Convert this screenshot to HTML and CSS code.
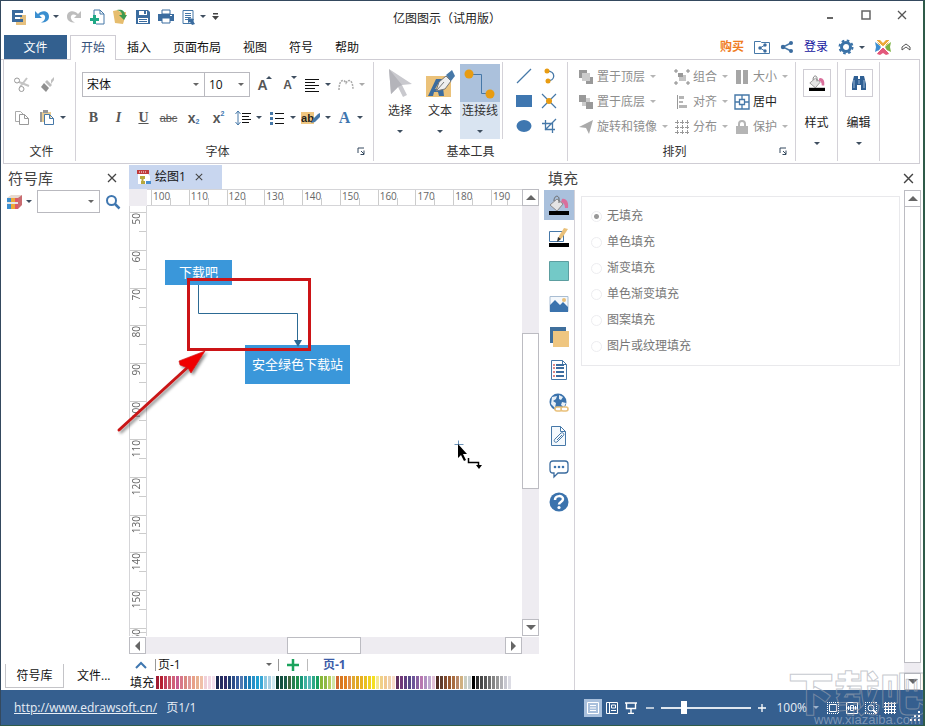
FILE: index.html
```html
<!DOCTYPE html>
<html lang="zh-CN">
<head>
<meta charset="utf-8">
<title>亿图图示（试用版）</title>
<link rel="stylesheet" href="styles.css">
</head>
<body>
<svg class="defs" aria-hidden="true">
  <symbol id="bucket" viewBox="0 0 20 20">
    <path d="M13 4c4-1 7 3 6 9l-3 0c0-3-1-5-4-6z" fill="#d9709c"/>
    <path d="M1 10l7-6 6 5-6 7z" fill="#e4e4e4" stroke="#8a8a8a"/>
    <path d="M5 6c0-6 5-6 5-2v4" fill="none" stroke="#666"/>
    <path d="M0 16h20v4H0z" fill="#000"/>
  </symbol>
  <symbol id="close" viewBox="0 0 10 10"><path d="M1 1l8 8M9 1L1 9" stroke="currentColor" stroke-width="1.3" fill="none"/></symbol>
  <symbol id="launch" viewBox="0 0 8 8"><path d="M1 6V1h6M4 4l3 3M7 3.500v4H3.500" stroke="#34495e" fill="none"/></symbol>
</svg>
<div class="app">
  <header class="titlebar">
    <div class="quick">
      <button class="ib" aria-label="菜单"><svg width="16" height="16"><path d="M9 6h6v10H5v-3h7v-2H9z" fill="#e5c07f"/><path d="M1 1h11v3H4v2h7v2H4v2h8v3H1z" fill="#3a6a9d"/></svg></button>
      <button class="ib drop" aria-label="撤销"><svg width="16" height="16"><path d="M1 2v7h7L5.500 6.500C9 4 12 6 11 9.500c-.5 2-2 3-4 4 5 0 8-2 8-6C15 2 8 .5 4 5z" fill="#3b8fd0"/></svg><i class="caret"></i></button>
      <button class="ib" aria-label="重做"><svg width="16" height="16"><path d="M15 2v7H8l2.500-2.500C7 4 4 6 5 9.500c.5 2 2 3 4 4C4 13.500 1 11.500 1 7.500 1 2 8 .5 12 5z" fill="#bdbdbd"/></svg></button>
      <button class="ib" aria-label="新建"><svg width="16" height="16"><path d="M5 8V1h6l4 4v10H7" fill="#fff" stroke="#4678a8"/><path d="M11 1v4h4" fill="none" stroke="#4678a8"/><path d="M4 6h3v3h3v3H7v3H4v-3H1V9h3z" fill="#1fa886"/></svg></button>
      <button class="ib" aria-label="打开"><svg width="16" height="16"><path d="M1 2l5-1 2 2h6v2l-3 10-8-1z" fill="#e6bd6e"/><path d="M5 1c5-1 8 1 8 5h2l-3 5-5-5h3C10 3 8 2 5 1z" fill="#3d9a50"/></svg></button>
      <button class="ib" aria-label="保存"><svg width="16" height="16"><path d="M1 1h12l2 2v12H1z" fill="#3b6c9f"/><path d="M4 2h8v4H4zM3 9h10v5H3z" fill="#fff"/><path d="M9 2h2v3H9zM4 10h8v1H4zM4 12h8v1H4z" fill="#3b6c9f"/></svg></button>
      <button class="ib" aria-label="打印"><svg width="16" height="16"><path d="M4 1h8v4H4z" fill="#fff" stroke="#3b6c9f"/><path d="M0 5h16v7H0z" fill="#3b6c9f"/><path d="M4 9h8v5H4z" fill="#fff" stroke="#3b6c9f"/><path d="M12 6h2v1h-2z" fill="#fff"/></svg></button>
      <button class="ib drop" aria-label="预览"><svg width="16" height="16"><path d="M2 1.500h10v13H2z" fill="#fff" stroke="#4678a8"/><path d="M4 4.500h6M4 6.500h6M4 8.500h6M4 10.500h3" stroke="#4678a8"/><path d="M7 9l6 1-1 2 2 3-3 1-2-3-2 1z" fill="#3b6c9f"/></svg><i class="caret"></i></button>
      <button class="ib mini" aria-label="自定义"><svg width="8" height="8"><path d="M1 0h5v1.500H1z" fill="#444"/><path d="M0 3h7L3.500 7z" fill="#444"/></svg></button>
    </div>
    <h1>亿图图示（试用版）</h1>
    <div class="winbtns">
      <button aria-label="最小化"><svg width="10" height="10"><path d="M2 7h6v2H2z" fill="#666"/></svg></button>
      <button aria-label="最大化"><svg width="10" height="10"><path d="M1 1h8v8H1z" fill="none" stroke="#666" stroke-width="1.500"/></svg></button>
      <button aria-label="关闭"><svg width="10" height="10"><use href="#close"/></svg></button>
    </div>
  </header>

  <nav class="tabs">
    <button class="file">文件</button>
    <button class="tab on">开始</button><button class="tab">插入</button><button class="tab">页面布局</button><button class="tab">视图</button><button class="tab">符号</button><button class="tab">帮助</button>
    <div class="account">
      <a href="#buy" class="buy">购买</a>
      <button aria-label="分享文件夹"><svg width="16" height="16"><path d="M.5 2.500h6l1 1h8v11H.5z" fill="none" stroke="#4678a8"/><path d="M11 6L6 9l5 3" fill="none" stroke="#4678a8"/><g fill="#3b6c9f"><circle cx="11" cy="6" r="1.700"/><circle cx="6" cy="9" r="1.700"/><circle cx="11" cy="12" r="1.700"/></g></svg></button>
      <button aria-label="分享"><svg width="14" height="14"><path d="M11 3L3 7l8 4" fill="none" stroke="#4678a8" stroke-width="1.500"/><g fill="#3b6c9f"><circle cx="11" cy="3" r="2"/><circle cx="3" cy="7" r="2.200"/><circle cx="11" cy="11" r="2"/></g></svg></button>
      <a href="#login" class="login">登录</a>
      <button class="gear" aria-label="设置"><svg width="16" height="16"><circle cx="8" cy="8" r="4.500" fill="none" stroke="#3b73a8" stroke-width="3"/><circle cx="8" cy="8" r="6.500" fill="none" stroke="#3b73a8" stroke-width="2" stroke-dasharray="2.600 2.500"/></svg><i class="caret"></i></button>
      <button aria-label="主页"><svg width="16" height="16"><path d="M1 1l4 0 3 3 3-3h4l-3 5-4 1-4-1z" fill="#eda938"/><path d="M2 15l2-4 4-3 4 3 2 4-3 1-3-2-3 2z" fill="#e35a7c"/><path d="M0 3l4 3 2 2-2 3-4 2 1-5z" fill="#3c8ed0"/><path d="M16 3l-4 3-2 2 2 3 4 2-1-5z" fill="#7cb342"/><path d="M1 1l14 14M15 1L1 15" stroke="#fff"/></svg></button>
      <button aria-label="折叠功能区"><svg width="10" height="8"><path d="M1 4l4-3 4 3v3L5 4 1 7z" fill="#fff" stroke="#555"/></svg></button>
    </div>
  </nav>

  <section class="ribbon">
    <div class="group g-file">
      <div class="lines two">
        <div class="line">
          <button class="tb" aria-label="剪切"><svg width="16" height="16"><path d="M5 5l10 4M6 10L13 1" stroke="#c4c4c4" stroke-width="2"/><circle cx="3" cy="3.500" r="2.500" fill="#fff" stroke="#999"/><circle cx="7.500" cy="12" r="2.500" fill="#fff" stroke="#999"/></svg></button>
          <button class="tb" aria-label="格式刷"><svg width="16" height="16"><path d="M12 3l3-3v3l-3 4z" fill="#c0c0c0"/><path d="M8 3l5 5-2 2-5-5z" fill="#bbb"/><path d="M5 6l5 5-3 4-5-5z" fill="#8f8f8f"/></svg></button>
        </div>
        <div class="line">
          <button class="tb" aria-label="复制"><svg width="16" height="16"><path d="M5 11.500H1.500v-10h5l3 3" fill="none" stroke="#aaa"/><path d="M5.500 4.500h5l4 4v6h-9zM10.500 4.500v4h4" fill="#fff" stroke="#999"/></svg></button>
          <button class="tb paste" aria-label="粘贴"><svg width="16" height="16"><path d="M1 2h11v10H1z" fill="#e8cb92"/><path d="M1 2h2v10H1zM4 0h5v3H4z" fill="#969696"/><path d="M5.500 4.500h5l4 4v6h-9zM10.500 4.500v4h4" fill="#fff" stroke="#4678a8"/></svg><i class="caret"></i></button>
        </div>
      </div>
      <h2>文件</h2>
    </div>

    <div class="group g-font">
      <div class="lines two">
        <div class="line">
          <label class="combo family"><select aria-label="字体"><option>宋体</option></select></label>
          <label class="combo size"><select aria-label="字号"><option>10</option></select></label>
          <button class="tb" aria-label="增大字号"><span class="glyph sans">A</span><i class="caret up"></i></button>
          <button class="tb" aria-label="减小字号"><span class="glyph sans small">A</span><i class="caret top"></i></button>
          <button class="tb drop2" aria-label="对齐"><svg width="16" height="14"><path d="M1 1.500h14M1 4.500h10M1 7.500h14M1 10.500h10M1 13.500h14" stroke="#111"/></svg><i class="caret"></i></button>
          <button class="tb drop2 dim" aria-label="弯曲文字"><svg width="16" height="14"><path d="M1 12C1 1 6 1 8 5c2-4 7-4 7 7" fill="none" stroke="#aaa" stroke-width="1.500" stroke-dasharray="2 1"/></svg><i class="caret"></i></button>
        </div>
        <div class="line">
          <button class="tb glyph serif">B</button>
          <button class="tb glyph serif ital">I</button>
          <button class="tb glyph serif under">U</button>
          <button class="tb glyph strike">abc</button>
          <button class="tb glyph sans" aria-label="下标">x<sub>2</sub></button>
          <button class="tb glyph sans" aria-label="上标">x<sup>2</sup></button>
          <button class="tb drop2" aria-label="行距"><svg width="16" height="16"><path d="M3 1v14M.5 4L3 1l2.500 3M.5 12L3 15l2.500-3" fill="none" stroke="#4678a8"/><path d="M7 3.500h9M7 6.500h7M7 9.500h9M7 12.500h7" stroke="#111"/></svg><i class="caret"></i></button>
          <button class="tb drop2" aria-label="项目符号"><svg width="16" height="14"><path d="M1 1h3v3H1zM1 6h3v3H1zM1 11h3v3H1z" fill="#4678a8"/><path d="M6 2.500h9M6 7.500h9M6 12.500h9" stroke="#111"/></svg><i class="caret"></i></button>
          <button class="tb drop2" aria-label="突出显示"><span class="mark">ab</span><svg class="pen" width="9" height="10"><path d="M9 0v4L4 9 0 10l2-4 5-5z" fill="#4678a8"/></svg><i class="caret"></i></button>
          <button class="tb drop2" aria-label="字体颜色"><span class="glyph serif blue">A</span><i class="caret"></i></button>
        </div>
      </div>
      <h2>字体</h2><button class="launcher" aria-label="字体设置"><svg width="8" height="8"><use href="#launch"/></svg></button>
    </div>

    <div class="group g-tools">
      <div class="bigs">
        <button class="big"><span><svg width="26" height="32"><path d="M2 2l23 15-10 1 5 10-4 2-5-10-7 7z" fill="#c9c9ce"/><path d="M2 2l13 16-4 2-7 7z" fill="#b4b4ba"/></svg></span>选择<i class="caret"></i></button>
        <button class="big"><span><svg width="30" height="32"><path d="M1 9h25v21H1z" fill="#ebc27a"/><path d="M3 29l8-17h6l2 17h-5l-1-4H9l-1 4zM10 22h3v-5z" fill="#3b6c9f"/><path d="M14 15l7-6 5 5-6 8-9 2z" fill="#eee" stroke="#777"/><path d="M12 23l7-8" stroke="#777"/><path d="M21 8l6-5 3 6-4 5z" fill="#4678a8"/></svg></span>文本<i class="caret"></i></button>
        <button class="big on"><span><svg width="34" height="32"><path d="M8 7.500h10.500v19H30" fill="none" stroke="#4678a8"/><circle cx="6" cy="7" r="4.500" fill="#e89c12"/><circle cx="27" cy="27" r="4.500" fill="#e89c12"/></svg></span>连接线<i class="caret"></i></button>
      </div>
      <div class="shapes">
        <button aria-label="直线"><svg width="16" height="16"><path d="M1 15L15 1" stroke="#4678a8" stroke-width="1.300"/></svg></button>
        <button aria-label="弧线"><svg width="16" height="16"><path d="M6 3c9 0 9 10 0 10" fill="none" stroke="#4678a8" stroke-width="1.300"/><circle cx="6" cy="3" r="2.500" fill="#e89c12"/><circle cx="7" cy="13" r="2.500" fill="#e89c12"/></svg></button>
        <button aria-label="矩形"><svg width="16" height="16"><path d="M0 2h16v12H0z" fill="#3f77b0"/></svg></button>
        <button aria-label="连接点"><svg width="16" height="16"><path d="M1 1l14 14M15 1L1 15" stroke="#4678a8" stroke-width="1.200"/><circle cx="8" cy="8" r="3" fill="#e89c12"/></svg></button>
        <button aria-label="椭圆"><svg width="16" height="16"><ellipse cx="8" cy="8" rx="7.500" ry="6" fill="#3f77b0"/></svg></button>
        <button aria-label="裁剪"><svg width="16" height="16"><path d="M4.500 2v9.500H14M1 5.500h10.500V15M4 12L15 1" fill="none" stroke="#4678a8" stroke-width="1.300"/></svg></button>
      </div>
      <h2>基本工具</h2>
    </div>

    <div class="group g-arrange">
      <div class="arrange">
        <button disabled><svg width="16" height="16"><path d="M1 1h8v8H1z" fill="#999"/><path d="M8 8h7v7H8z" fill="#999"/><path d="M4 4h8v8H4z" fill="#ccc"/></svg>置于顶层<i class="caret"></i></button>
        <button disabled><svg width="16" height="16"><path d="M5 6h7v6H5z" fill="#c4c4c4"/><path d="M4 4h5v4H4z" fill="#999"/><path d="M1 1h2v2H1zM13 1h2v2h-2zM1 13h2v2H1zM13 13h2v2h-2z" fill="#fff" stroke="#888"/></svg>组合<i class="caret"></i></button>
        <button disabled><svg width="16" height="16"><path d="M2 1h5v14H2zM9 1h5v14H9z" fill="#a6a6a6"/></svg>大小<i class="caret"></i></button>
        <button disabled><svg width="16" height="16"><path d="M4 4h8v8H4z" fill="#ccc"/><path d="M1 1h7v7H1zM8 8h7v7H8z" fill="#999"/></svg>置于底层<i class="caret"></i></button>
        <button disabled><svg width="16" height="16"><path d="M3.500 1v14" stroke="#999"/><path d="M5 2h5v3H5zM5 7h4v2H5zM5 11h8v3H5z" fill="#b5b5b5"/></svg>对齐<i class="caret"></i></button>
        <button class="live"><svg width="16" height="16"><path d="M1 1h14v14H1z" fill="none" stroke="#4678a8" stroke-width="1.400"/><path d="M5.500 5.500h5v5h-5zM8 1v4M8 11v4M1 8h4M11 8h4" fill="none" stroke="#4678a8" stroke-width="1.300"/></svg>居中</button>
        <button disabled><svg width="16" height="16"><path d="M1 8l14-7-4 14-3-6z" fill="#aaa"/></svg>旋转和镜像<i class="caret"></i></button>
        <button disabled><svg width="16" height="16"><path d="M1 3.500h14M1 8.500h14M1 13.500h14M3.500 1v14M8.500 1v14M13.500 1v14" stroke="#999" stroke-dasharray="4 1"/></svg>分布<i class="caret"></i></button>
        <button disabled><svg width="16" height="16"><path d="M2 7h12v8H2z" fill="#b5b5b5"/><path d="M5 8V5c0-4 6-4 6 0v3" fill="none" stroke="#b5b5b5" stroke-width="2"/></svg>保护<i class="caret"></i></button>
      </div>
      <h2>排列</h2><button class="launcher" aria-label="排列设置"><svg width="8" height="8"><use href="#launch"/></svg></button>
    </div>

    <div class="group slim"><button><span><svg width="16" height="16"><use href="#bucket"/></svg></span>样式<i class="caret"></i></button></div>
    <div class="group slim"><button><span><svg width="16" height="16"><path d="M3 1h4v3h2V1h4l2 8v6h-5v-5H6v5H1V9z" fill="#2f5f93"/><path d="M3 5v8M13 5v8M8 5v4" stroke="#9bb8d6"/></svg></span>编辑<i class="caret"></i></button></div>
  </section>

  <main class="work">
    <aside class="library">
      <div class="phead"><h3>符号库</h3><button aria-label="关闭符号库"><svg width="10" height="10"><use href="#close"/></svg></button></div>
      <div class="find">
        <button aria-label="图库"><svg width="15" height="16"><path d="M0 4l4-3h11l-2 4z" fill="#e7d9cf"/><path d="M0 4h4v11H0z" fill="#3b8fd0"/><path d="M4 4h4v11H4z" fill="#eda938"/><path d="M8 4l3 0v11H8z" fill="#dd5b66"/><path d="M11 4l4-3v10l-4 4z" fill="#c96b70"/><path d="M0 8h11v2H0z" fill="#e6e6e6"/></svg><i class="caret"></i></button>
        <label class="combo"><select aria-label="搜索符号"><option></option></select></label>
        <button aria-label="搜索"><svg width="16" height="16"><circle cx="6.500" cy="6.500" r="4.500" fill="none" stroke="#3f77b0" stroke-width="2"/><path d="M10 10l4.500 4.500" stroke="#3f77b0" stroke-width="2.500"/></svg></button>
      </div>
      <div class="ltabs"><button class="on">符号库</button><button>文件...</button></div>
    </aside>

    <section class="document">
      <div class="dtabs"><div class="dtab"><svg width="16" height="16"><path d="M2 4h9l3 3v8H2z" fill="#fff"/><path d="M1 1h12v4H1z" fill="#c03a3a"/><path d="M3 3h8" stroke="#fff" stroke-dasharray="1 1"/><path d="M4 7h5v3H4zM5 12h4v3H5z" fill="#b8a83c"/><path d="M6.500 9v4" stroke="#b8a83c" stroke-width="2"/><path d="M10 12h5v3h-5z" fill="#4a8ed0"/></svg>绘图1<button aria-label="关闭绘图1"><svg width="8" height="8"><use href="#close"/></svg></button></div></div>
      <div class="stage">
        <div class="corner"></div>
        <div class="hruler" id="hruler"></div>
        <div class="vscroll"><button aria-label="向上"><i class="arrow n"></i></button><div class="rail"><div class="thumb"></div></div><button aria-label="向下"><i class="arrow s"></i></button></div>
        <div class="vruler" id="vruler"></div>
        <div class="canvas">
          <div class="node start">下载吧</div>
          <div class="node end">安全绿色下载站</div>
          <svg class="ink" width="220" height="180">
            <defs><filter id="sh" x="-20%" y="-20%" width="140%" height="140%"><feDropShadow dx="2" dy="2" stdDeviation="1.500" flood-opacity=".45"/></filter></defs>
            <path d="M88.500 15v28.500h99V70" fill="none" stroke="#2c6a94"/><path d="M184 70h8l-4 7z" fill="#2c6a94"/>
            <path d="M78.500 9.500h121v70h-121z" fill="none" stroke="#cc1417" stroke-width="3"/>
            <g filter="url(#sh)"><path d="M9 160L78 97" stroke="#c91418" stroke-width="3" stroke-linecap="round"/><path d="M95 81L81 103l-3-5-8-3-1-4z" fill="#f00505" stroke="#c91418" stroke-width=".6"/></g>
          </svg>
          <svg class="cursor" width="32" height="32"><path d="M.5 4.500h9M4.500.5v9" stroke="#6c93b8"/><path d="M4 4v14l3-3 3 6 2-1-3-6h4z" fill="#000"/><path d="M14.500 18v4.500h10V27" fill="none" stroke="#000" stroke-width="1.500"/><path d="M22 25h6l-3 4z" fill="#000"/></svg>
        </div>
        <div class="hscroll"><button aria-label="向左"><i class="arrow w"></i></button><div class="rail"><div class="thumb"></div></div><button aria-label="向右"><i class="arrow e"></i></button></div>
      </div>
      <div class="pages">
        <button class="chev" aria-label="展开页"><svg width="12" height="8"><path d="M1 7l5-5 5 5" fill="none" stroke="#3f77b0" stroke-width="2"/></svg></button>
        <label class="pagesel"><select aria-label="页"><option>页-1</option></select></label>
        <button class="add" aria-label="新增页"><svg width="12" height="12"><path d="M6 0v12M0 6h12" stroke="#1ba35c" stroke-width="2.500"/></svg></button>
        <a href="#page1">页-1</a>
      </div>
      <div class="palette"><span>填充</span><div class="swatches" id="swatches"></div></div>
    </section>

    <aside class="props">
      <div class="phead"><h3>填充</h3><button aria-label="关闭填充"><svg width="11" height="11" viewBox="0 0 10 10"><use href="#close"/></svg></button></div>
      <div class="pbody">
        <div class="side">
          <button class="on" aria-label="填充"><svg width="20" height="20"><use href="#bucket"/></svg></button>
          <button aria-label="线条"><svg width="20" height="20"><path d="M.5 3.500h14v10H.5z" fill="#fff" stroke="#4678a8"/><path d="M15 0l4 1-6 9-4 3 1-5z" fill="#e9c07a"/><path d="M9 9l3 2-4 3z" fill="#333"/><path d="M0 15h20v4H0z" fill="#000"/></svg></button>
          <button aria-label="阴影"><svg width="20" height="20"><path d="M.5.5h19v19H.5z" fill="#73c9c7" stroke="#5c9ea0"/></svg></button>
          <button aria-label="图片"><svg width="20" height="20"><path d="M1 2.500h18v15H1z" fill="#f4f8fc" stroke="#a9bdd2"/><path d="M1 17V11l5-5 5 5 3-3 5 5v5H1z" fill="#3b73ad"/><circle cx="15" cy="6" r="2" fill="#e9c07a"/></svg></button>
          <button aria-label="图层"><svg width="20" height="20"><path d="M1 0h16v16H1z" fill="#3f6f9c"/><path d="M4 4h16v16H4z" fill="#efc680"/></svg></button>
          <button aria-label="页面属性"><svg width="18" height="20"><path d="M1.500.5h11l4 4v15h-15zM12.500.5v4h4" fill="#fff" stroke="#4678a8"/><path d="M6 5h8M6 8h8M6 12h8M6 16h8" stroke="#3b6c9f" stroke-width="2"/><path d="M3 5h2M3 8h2M3 12h2M3 16h2" stroke="#d88" stroke-width="2"/></svg></button>
          <button aria-label="超链接"><svg width="20" height="20"><circle cx="9" cy="9" r="8.500" fill="#3b73ad"/><path d="M3 4l5-1-1 3-3 2 3 2-1 5-4-4zM10 2l4 2-2 3-2-1zM13 9l4 1-2 4-3-2z" fill="#e8f0f7"/><g fill="#fff" stroke="#e9c07a" stroke-width="1.600"><rect x="6" y="14" width="7" height="4" rx="2"/><rect x="12" y="14" width="7" height="4" rx="2"/></g></svg></button>
          <button aria-label="附件"><svg width="18" height="20"><path d="M1.500.5h9l5 5v14h-14zM10.500.5v5h5" fill="#f4f9fd" stroke="#4678a8"/><path d="M5 13l6-6c2-1 4 1 2 3l-6 6c-2 1-4-1-2-3l5-5M7 14l5-5" fill="none" stroke="#4678a8"/></svg></button>
          <button aria-label="注释"><svg width="20" height="20"><path d="M4 2h12c2 0 3 1 3 3v6c0 2-1 3-3 3H9l-4 4v-4H4c-2 0-3-1-3-3V5c0-2 1-3 3-3z" fill="#fff" stroke="#3b6c9f" stroke-width="1.300"/><g fill="#3b73ad"><circle cx="6" cy="8" r="1.300"/><circle cx="10" cy="8" r="1.300"/><circle cx="14" cy="8" r="1.300"/></g></svg></button>
          <button aria-label="帮助"><svg width="20" height="20"><circle cx="10" cy="10" r="9.500" fill="#3b73ad"/><path d="M6 8c0-5 8-5 8-1 0 3-4 3-4 5.500" fill="none" stroke="#fff" stroke-width="2.500"/><circle cx="10" cy="15.500" r="1.600" fill="#fff"/></svg></button>
        </div>
        <div class="options">
          <fieldset disabled>
            <label><input type="radio" name="fill" checked>无填充</label>
            <label><input type="radio" name="fill">单色填充</label>
            <label><input type="radio" name="fill">渐变填充</label>
            <label><input type="radio" name="fill">单色渐变填充</label>
            <label><input type="radio" name="fill">图案填充</label>
            <label><input type="radio" name="fill">图片或纹理填充</label>
          </fieldset>
        </div>
        <div class="vscroll long"><button aria-label="面板向上"><i class="arrow n"></i></button><div class="rail"><div class="thumb"></div></div><button aria-label="面板向下"><i class="arrow s"></i></button></div>
      </div>
    </aside>
  </main>

  <footer class="status">
    <a href="http://www.edrawsoft.cn/">http://www.edrawsoft.cn/</a><span>页1/1</span>
    <div class="zoombar">
      <button class="on" aria-label="普通视图"><svg width="12" height="12"><path d="M.5.5h11v11H.5zM3 3.500h6M3 6h6M3 8.500h6" fill="none" stroke="#fff"/></svg></button>
      <button aria-label="大纲视图"><svg width="12" height="12"><path d="M.5.5h11v11H.5zM3.500 1v10M5.500 3v3h4V3zM5 8.500h5" fill="none" stroke="#fff"/></svg></button>
      <button aria-label="演示视图"><svg width="12" height="12"><path d="M0 1h12M1.500 1v5.500h9V1M6 7v4M3 11.500h6" fill="none" stroke="#fff" stroke-width="1.400"/></svg></button>
      <button aria-label="缩小"><svg width="10" height="10"><path d="M1 5h8" stroke="#fff" stroke-width="1.300"/></svg></button>
      <input type="range" min="0" max="100" value="23" aria-label="缩放">
      <button aria-label="放大"><svg width="10" height="10"><path d="M1 5h8M5 1v8" stroke="#fff" stroke-width="1.300"/></svg></button>
      <button class="pct">100%<i class="caret"></i></button>
      <button aria-label="适合页面"><svg width="12" height="12"><path d="M2.500 2.500h7v7h-7z" fill="none" stroke="#fff"/><path d="M0 .5h12M0 11.500h12M.5 0v12M11.500 0v12" fill="none" stroke="#fff" stroke-dasharray="1 1"/></svg></button>
      <button aria-label="适合宽度"><svg width="12" height="12"><path d="M.5.500h11v11H.5zM4.500 3.500h3v5h-3zM2.500 4v4M9.500 4v4M1 6h10" fill="none" stroke="#fff"/></svg></button>
      <button aria-label="区域缩放"><svg width="12" height="12"><path d="M0 .5h12M0 11.500h12M.5 0v12M11.500 0v12" fill="none" stroke="#fff" stroke-dasharray="1 1"/><circle cx="6" cy="6" r="3" fill="none" stroke="#fff"/><path d="M8 8l4 4" stroke="#fff" stroke-width="2"/></svg></button>
      <button aria-label="网格"><svg width="12" height="12"><path d="M1.500 0v12M4.500 0v12M7.500 0v12M10.500 0v12M0 1.500h12M0 4.500h12M0 7.500h12M0 10.500h12" stroke="#fff"/></svg></button>
    </div>
    <svg class="grip" width="10" height="10"><path d="M8 0h2v2H8zM8 4h2v2H8zM4 4h2v2H4zM8 8h2v2H8zM4 8h2v2H4zM0 8h2v2H0z" fill="#fff"/></svg>
  </footer>
  <div class="brand"><b>下载吧</b><span>www.xiazaiba.com</span></div>
</div>
<script src="app.js"></script>
</body>
</html>
```
FILE: styles.css
```css
* { box-sizing: border-box; }
body {
  margin: 0;
  background: #fff;
  color: #222;
  font: 12px/18px "Open Sans", "Noto Sans CJK SC", sans-serif;
}
button, select, input { font: inherit; color: inherit; margin: 0; }
button { border: 0; padding: 0; background: none; display: flex; align-items: center; justify-content: center; white-space: nowrap; }
svg { flex: none; display: block; }
h1, h2, h3 { margin: 0; font-weight: 400; }
.defs { position: absolute; width: 0; height: 0; }

.app {
  position: relative;
  overflow: hidden;
  height: 100vh;
  display: flex;
  flex-direction: column;
  border: solid #34495e;
  border-width: 1px 2px 1px 1px;
  border-right-color: #2f5b49;
  border-bottom-color: #2f5b49;
}

.caret { flex: none; border: 3px solid transparent; border-top-color: #3f4f60; border-bottom: 0; }

/* title bar */
.titlebar { flex: none; height: 34px; display: grid; grid-template-columns: 392px 1fr auto; align-items: center; }
.quick { display: flex; padding: 0 0 3px 6px; }
.ib { width: 23px; height: 22px; }
.ib.drop { width: 32px; gap: 3px; }
.ib.mini { width: 14px; }
.titlebar h1 { font-size: 12px; padding-top: 2px; }
.winbtns { display: flex; padding: 0 16px 6px 0; gap: 26px; color: #555; }

/* tabs */
.tabs { flex: none; height: 25px; display: flex; padding-left: 3px; border-bottom: 1px solid #cfcdd4; margin-right: 3px; }
.file { width: 63px; background: #33608f; color: #fff; margin-right: 3px; padding-top: 2px; }
.tab { padding: 2px 11px 0; color: #111; }
.tab.on { margin-bottom: -1px; padding: 0 10px; color: #33507a; background: #fff; border: 1px solid #cfcdd4; border-bottom: 0; }
.account { margin-left: auto; display: flex; align-items: center; gap: 10px; padding-right: 9px; }
.account a { text-decoration: none; }
.account .buy { color: #f07c1e; font-weight: 700; }
.account .login { color: #1414a0; }
.gear { gap: 5px; }

/* ribbon */
.ribbon { flex: none; height: 104px; margin: 0 3px 0 2px; display: flex; border: 1px solid #cfcdd4; border-top: 0; }
.group { position: relative; display: flex; flex-direction: column; border-right: 1px solid #d4d2d8; margin: 2px 0; }
.group h2 { font-size: 12px; text-align: center; height: 18px; margin-top: auto; color: #333; }
.g-file { width: 72px; }
.g-file h2 { padding-left: 4px; }
.g-font { width: 298px; }
.g-font h2 { padding-right: 14px; }
.g-tools { width: 194px; display: grid; grid-template-columns: auto 1fr; grid-template-rows: 78px auto; }
.g-tools h2 { grid-column: 1 / 3; }
.g-arrange { width: 228px; }
.g-arrange h2 { padding-right: 14px; }
.launcher { position: absolute; right: 8px; bottom: 6px; }
.lines { display: flex; flex-direction: column; gap: 8px; padding: 10px 0 0 5px; }
.line { display: flex; height: 25px; align-items: center; }
.tb { width: 25px; height: 24px; position: relative; }
.tb.paste { width: 36px; gap: 5px; }
.tb.drop2 { width: 34px; gap: 5px; }
.dim .caret { border-top-color: #aaa; }
.combo { position: relative; height: 25px; display: flex; border: 1px solid #b9b9bf; background: #fff; }
.combo select, .pagesel select { appearance: none; border: 0; background: none; width: 100%; padding: 0 4px; outline: 0; color: #111; }
.combo::after, .pagesel::after { content: ""; position: absolute; right: 5px; top: 50%; margin-top: -2px; border: 3px solid transparent; border-top-color: #666; border-bottom: 0; }
.family { width: 123px; }
.g-font .line > .family { margin-left: 1px; }
.size { width: 46px; margin-left: -1px; }
.tb .up { position: absolute; right: 3px; top: 3px; transform: scaleY(-1); }
.tb .top { position: absolute; right: 3px; top: 3px; }
.glyph { font-weight: 700; color: #555; font-size: 14px; }
.glyph.small { font-size: 12px; }
.sans { font-family: "Liberation Sans", sans-serif; }
.serif { font-family: "Liberation Serif", serif; }
.ital { font-style: italic; }
.under { text-decoration: underline; }
.strike { font: 11px "Liberation Sans", sans-serif; text-decoration: line-through; }
.blue { color: #3f77b0; font-size: 16px; padding: 0 2px; }
.glyph sub, .glyph sup { font-size: 7px; line-height: 8px; color: #3f77b0; }
.glyph sup { align-self: flex-start; margin-top: 4px; }
.glyph sub { align-self: flex-end; margin-bottom: 4px; }
.mark { font: 700 11px/12px "Liberation Sans", sans-serif; background: #efc680; color: #222; }
.pen { margin-left: -8px; }

.bigs { display: flex; padding: 2px 2px 0 6px; border-right: 1px solid #d4d2d8; margin-bottom: 1px; }
.big { width: 40px; flex-direction: column; justify-content: flex-start; color: #333; padding-bottom: 5px; }
.big span { height: 38px; width: 40px; display: flex; align-items: center; justify-content: center; }
.big .caret, .slim .caret { margin-top: 10px; }
.big.on { background: #d9e4f1; }
.big.on span { background: #abc1dc; }
.shapes { display: grid; grid-template-columns: 25px 25px; grid-auto-rows: 25px; padding: 1px 0 0 8px; }
.arrange { display: grid; grid-template-columns: 96px 60px 1fr; grid-auto-rows: 25px; padding: 2px 0 0 10px; }
.arrange button { justify-content: flex-start; gap: 3px; color: #8e8e8e; }
.arrange .caret { border-top-color: #b5b5b5; margin-left: 2px; }
.arrange button.live { color: #222; }
.slim { width: 42px; align-items: center; }
.slim button { flex-direction: column; padding-top: 7px; color: #222; }
.slim span { width: 28px; height: 28px; border: 1px solid #cfcdd4; display: flex; align-items: center; justify-content: center; margin-bottom: 17px; }

/* work area */
.work { flex: 1; min-height: 0; display: grid; grid-template-columns: 128px minmax(0, 1fr) 384px; }
.phead { flex: none; height: 26px; display: flex; justify-content: space-between; align-items: center; color: #444; padding: 2px 12px 0 7px; }
.phead h3 { font-size: 15px; line-height: 22px; }
.library { display: flex; flex-direction: column; }
.find { display: flex; align-items: center; gap: 5px; padding-left: 6px; }
.find button { gap: 4px; }
.find .combo { width: 63px; height: 23px; }
.ltabs { margin-top: auto; display: flex; padding: 0 0 2px 4px; gap: 13px; }
.ltabs button { height: 24px; color: #111; }
.ltabs .on { width: 59px; border: 1px solid #c4c4c8; border-top: 0; }

.document { display: flex; flex-direction: column; min-width: 0; }
.dtabs { flex: none; height: 25px; display: flex; padding-top: 1px; }
.dtab { width: 93px; background: #c8d6ef; display: flex; align-items: center; padding-left: 7px; gap: 3px; color: #111; }
.dtab button { margin-left: 6px; color: #444; }
.stage { flex: 1; min-height: 0; display: grid; grid-template-columns: 18px minmax(0, 1fr) 17px; grid-template-rows: 17px minmax(0, 1fr) 18px; }
.corner { background: #eeecf1; }
.hruler { display: flex; padding-left: 4px; border: solid #d5d5d8; border-width: 1px 0; overflow: hidden; font-size: 10px; line-height: 12px; color: #666; }
.hruler div { flex: 1; min-width: 0; border-left: 1px solid #ccc; padding-left: 1px; background: linear-gradient(#ccc, #ccc) 50% 100% / 1px 7px no-repeat; }
.hruler div:last-child { flex: none; width: 31px; }
.vruler { display: flex; flex-direction: column; padding-top: 6px; border: solid #d5d5d8; border-width: 0 1px; overflow: hidden; font-size: 10px; line-height: 12px; color: #666; }
.vruler div { flex: 1; min-height: 0; border-top: 1px solid #ccc; background: linear-gradient(#ccc, #ccc) 100% 50% / 7px 1px no-repeat; }
.vruler div:last-child { flex: none; height: 8px; overflow: hidden; }
.vruler span { display: block; writing-mode: vertical-rl; transform: rotate(180deg); width: 12px; }
.vscroll { grid-column: 3; grid-row: 1 / 3; display: flex; flex-direction: column; background: #eeecf1; }
.vscroll button, .hscroll button { flex: none; width: 17px; height: 17px; background: #fff; border: 1px solid #bcbcc2; }
.rail { flex: 1; display: flex; flex-direction: inherit; min-width: 0; min-height: 0; }
.thumb { background: #fff; border: 1px solid #bcbcc2; }
.vscroll .rail { padding-top: 127px; }
.vscroll .thumb { height: 156px; }
.hscroll { grid-column: 1 / 3; align-self: end; display: flex; background: #eeecf1; box-shadow: 17px 0 #eeecf1; }
.hscroll .rail { padding-left: 141px; }
.hscroll .thumb { width: 74px; }
.arrow { border: 5px solid transparent; }
.arrow.n { border-top: 0; border-bottom-color: #666; }
.arrow.s { border-bottom: 0; border-top-color: #666; }
.arrow.w { border-left: 0; border-right-color: #666; }
.arrow.e { border-right: 0; border-left-color: #666; }

.canvas { position: relative; background: #fff; }
.node { position: absolute; background: #3a97da; color: #fff; font-size: 13px; display: flex; align-items: center; justify-content: center; white-space: nowrap; padding-bottom: 2px; }
.start { left: 18px; top: 54px; width: 67px; height: 25px; }
.end { left: 98px; top: 139px; width: 105px; height: 39px; }
.ink { position: absolute; left: -37px; top: 64px; }
.cursor { position: absolute; left: 307px; top: 234px; }

.pages { flex: none; height: 22px; display: flex; align-items: center; padding-left: 5px; }
.chev { width: 14px; margin-right: 7px; }
.pagesel { position: relative; width: 124px; height: 12px; display: flex; align-items: center; border: solid #999; border-width: 0 1px; }
.pagesel select { padding: 0 2px; line-height: 18px; }
.pagesel::after { right: 6px; }
.add { width: 29px; height: 12px; border-right: 1px solid #bbb; }
.pages a { margin-left: 15px; color: #3c5ca8; font-weight: 700; text-decoration: none; }
.palette { flex: none; height: 14px; display: flex; line-height: 14px; color: #111; }
.palette span { flex: none; white-space: nowrap; padding-left: 1px; }
.swatches { display: flex; gap: 1px; padding-left: 2px; height: 13px; }
.swatches i { width: 3px; }

.props { display: flex; flex-direction: column; padding-left: 5px; min-width: 0; }
.props .phead { padding: 2px 9px 0 4px; }
.pbody { flex: 1; min-height: 0; display: flex; }
.side { width: 31px; display: flex; flex-direction: column; gap: 3px; border-right: 1px solid #d4d2d8; }
.side button { width: 30px; height: 30px; }
.side .on { background: #a9c0dc; }
.options { flex: 1; padding: 6px 4px 0 6px; }
fieldset { margin: 0; padding: 6px 9px; border: 1px solid #e9e9ec; min-width: 0; }
fieldset label { display: flex; align-items: center; height: 26px; gap: 5px; color: #777; }
fieldset input { appearance: none; width: 11px; height: 11px; border: 1px solid #ededf0; border-radius: 50%; }
fieldset input:checked { background: radial-gradient(#999 0 2px, transparent 3px); }
.long { margin-right: 2px; }
.long .rail { padding: 0 0 10px; }
.long .thumb { flex: 1; height: auto; border-top: 0; }

/* status bar */
.status { flex: none; position: relative; height: 35px; background: #355f8f; color: #e8eef6; display: flex; align-items: center; padding-left: 13px; gap: 9px; }
.status a { color: inherit; }
.zoombar { margin-left: auto; display: flex; align-items: center; padding-right: 24px; gap: 1px; }
.zoombar button { width: 18px; height: 18px; }
.zoombar .on { background: #a9c0dc; }
.zoombar .pct { width: auto; gap: 6px; padding: 0 4px; }
.pct .caret { border-top-color: #9fb4cd; }
.zoombar input { appearance: none; width: 90px; height: 14px; margin: 0 1px; background: linear-gradient(#dfe7f0, #dfe7f0) 50% 50% / 100% 2px no-repeat; }
.zoombar input::-webkit-slider-thumb { appearance: none; width: 6px; height: 13px; background: #fff; }
.grip { position: absolute; right: 3px; bottom: 4px; }

.brand { position: absolute; right: 0; bottom: 0; width: 135px; height: 56px; overflow: hidden; white-space: nowrap; pointer-events: none; color: transparent; }
.brand b { display: block; font-size: 46px; line-height: 46px; font-weight: 900; -webkit-text-stroke: 1px rgba(160, 165, 175, .6); }
.brand span { position: absolute; left: 26px; bottom: -3px; font: 13px/16px "Liberation Sans", sans-serif; color: rgba(170, 185, 205, .6); }
```
FILE: app.js
```js
const fillRuler = (id, first, last) => {
  const ruler = document.getElementById(id);
  for (let n = first; n <= last; n += 10) {
    const cell = document.createElement("div");
    const label = document.createElement("span");
    label.textContent = n;
    cell.append(label);
    ruler.append(cell);
  }
};
fillRuler("hruler", 100, 190);
fillRuler("vruler", 50, 160);

const colors = `a01c34 b52030 c0405c c85868 d06078 c85c90 d87888 d88880 e09898 e8a088 e8b090 f0c0a8 f0d0d8 f4d8e4 f4e0ec
1c2850 242c60 302c68 203c70 2c4c88 3860a0 5078b0 2474b0 1c80b8 2890c8 20a0d0 38a8d8 90c8e0 a8d0e4 d0e8f0
0c3c30 145040 1c5c48 406840 288050 20904c 189878 40b0a0 58b8b8 30a888 18a060 88b838 90b848 b8d060 d0e4a8
d06830 d87820 e08020 e09048 e0a830 e0a820 e8b020 e8c020 f0d020 f4e020 f4e890 f0d088 f0c890 f0d0a8 f8dcc8
603060 703878 604080 584888 6c5498 8860a0 b878b0 b090c0 c0a8d0 e0c0d8
502c24 603c2c 804c30 985830 a86c40 b88868 d0b080 c8ccc0 c8d0d0
000000 303030 484848 585858 707070 848484 989898 b0b0b4 c8c8d0 dcdce4`.split(/\s+/);
const swatches = document.getElementById("swatches");
for (const c of colors) {
  const bar = document.createElement("i");
  bar.style.background = "#" + c;
  swatches.append(bar);
}
```
